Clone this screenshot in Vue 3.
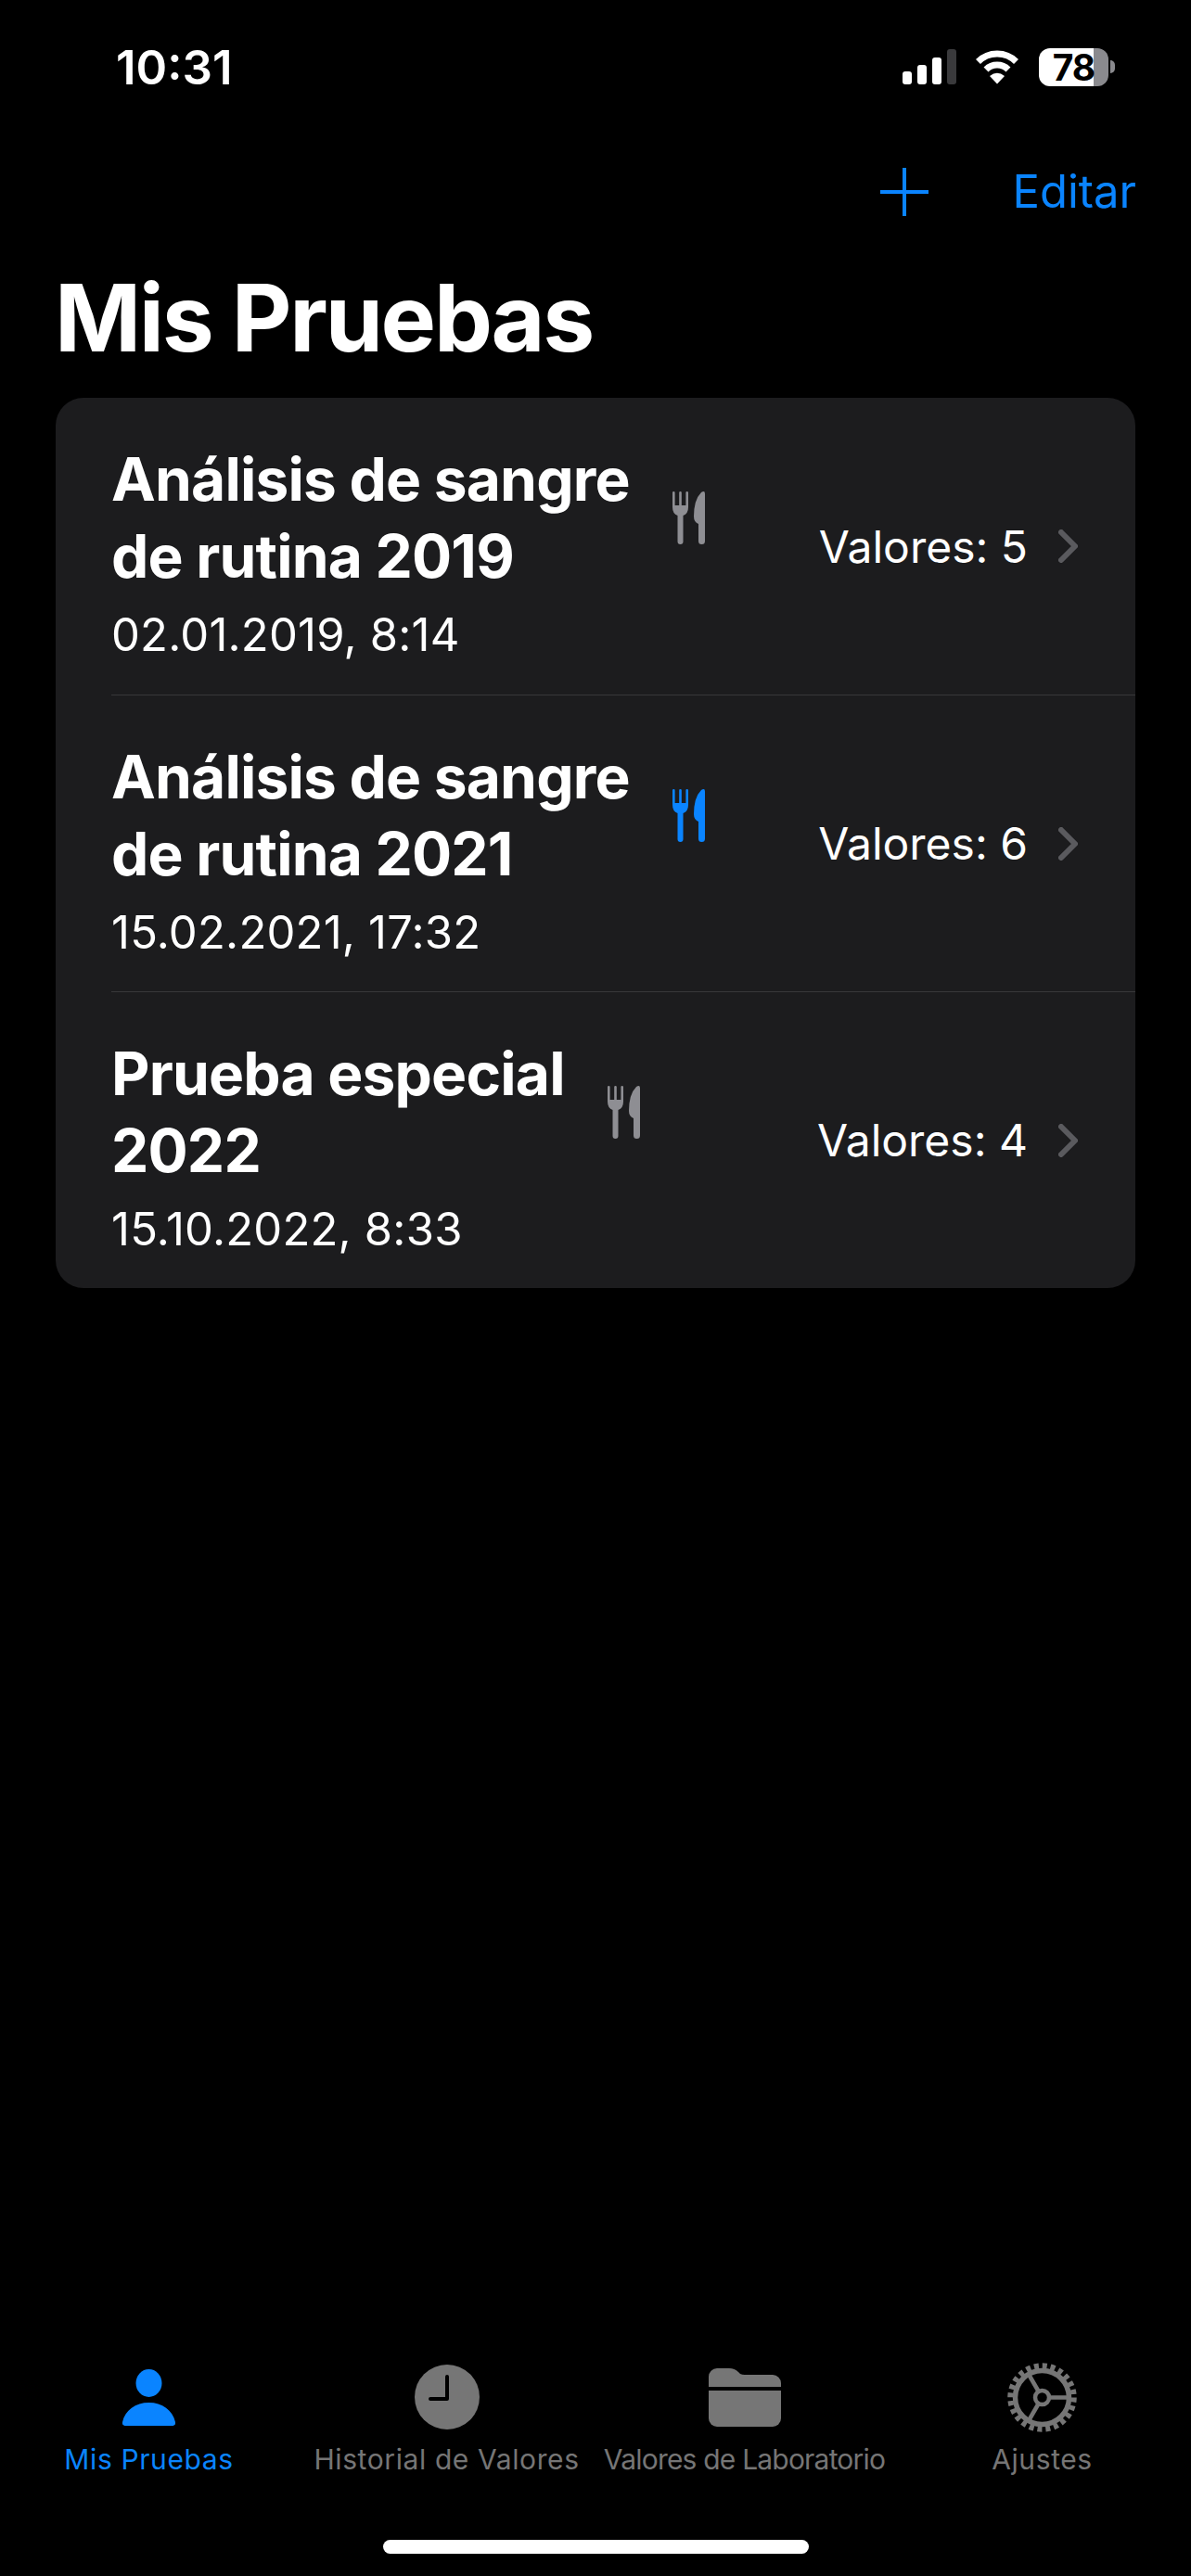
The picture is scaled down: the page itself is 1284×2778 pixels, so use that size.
<script setup>
const tests = [
  { lines: ['Análisis de sangre', 'de rutina 2019'], date: '02.01.2019, 8:14', values: 5, fasting: false },
  { lines: ['Análisis de sangre', 'de rutina 2021'], date: '15.02.2021, 17:32', values: 6, fasting: true },
  { lines: ['Prueba especial', '2022'], date: '15.10.2022, 8:33', values: 4, fasting: false }
]
</script>

<template>
  <div class="page">
    <!-- Status bar -->
    <div class="status-bar">
      <span class="time">10:31</span>
      <div class="status-icons">
        <div class="signal">
          <i class="bar b1"></i>
          <i class="bar b2"></i>
          <i class="bar b3"></i>
          <i class="bar b4"></i>
        </div>
        <svg class="wifi" width="50" height="37" viewBox="0 0 50 37">
          <path d="M4.5 12.5a29 29 0 0 1 41 0" fill="none" stroke="#fff" stroke-width="7" />
          <path d="M13 21a17 17 0 0 1 24 0" fill="none" stroke="#fff" stroke-width="7" />
          <path d="M25 36.5L17 28q8-6.500 16 0z" fill="#fff" />
        </svg>
        <div class="battery">78</div>
        <i class="battery-cap"></i>
      </div>
    </div>

    <!-- Nav -->
    <div class="nav">
      <svg width="52" height="52" viewBox="0 0 52 52">
        <path d="M26 0v52M0 26h52" stroke="#0a84ff" stroke-width="4" stroke-linecap="round" />
      </svg>
      <span class="edit">Editar</span>
    </div>

    <h1 class="title">Mis Pruebas</h1>

    <!-- List of tests -->
    <div class="card">
      <div v-for="test in tests" :key="test.date" class="row">
        <div class="row-text">
          <div v-for="line in test.lines" :key="line" class="row-title">{{ line }}</div>
          <div class="row-date">{{ test.date }}</div>
        </div>
        <svg class="cutlery" :class="{ active: test.fasting }" width="35" height="57" viewBox="0 0 35 57">
          <path d="M0 1.300a1.300 1.300 0 0 1 2.600 0V15h4.600V1.300a1.300 1.300 0 0 1 2.600 0V15h4.600V1.300a1.300 1.300 0 0 1 2.600 0V17q0 7-5.500 9v28a3 3 0 0 1-6 0V26Q0 24 0 17z" />
          <path d="M35 2.500V53.500a3.500 3.500 0 0 1-7 0V35q-5-2-5-8Q23 9 31 1q4-2.500 4 1.500z" />
        </svg>
        <span class="row-values">Valores: {{ test.values }}</span>
        <svg class="chevron" width="21" height="36" viewBox="0 0 21 36">
          <path d="M3 3l15 15L3 33" fill="none" stroke="#5a5a5e" stroke-width="6" stroke-linecap="round" stroke-linejoin="round" />
        </svg>
      </div>
    </div>

    <!-- Tab bar -->
    <div class="tabs">
      <div class="tab active">
        <div class="tab-icon">
          <svg width="57" height="61" viewBox="0 0 57 61">
            <ellipse cx="28.500" cy="15" rx="14" ry="15" fill="#0a84ff" />
            <path d="M3 61a3 3 0 0 1-3-4C3 44 14 36 28.500 36S54 44 57 57a3 3 0 0 1-3 4z" fill="#0a84ff" />
          </svg>
        </div>
        <span>Mis Pruebas</span>
      </div>
      <div class="tab">
        <div class="tab-icon">
          <svg width="70" height="70" viewBox="0 0 70 70">
            <circle cx="35" cy="35" r="35" fill="#767676" />
            <path d="M35 13v24H17" fill="none" stroke="#000" stroke-width="4" stroke-linecap="round" stroke-linejoin="round" />
          </svg>
        </div>
        <span>Historial de Valores</span>
      </div>
      <div class="tab tight">
        <div class="tab-icon">
          <svg width="78" height="63" viewBox="0 0 78 63">
            <path d="M0 20V9a9 9 0 0 1 9-9h13q6 0 10 4l2 2q2 1 5 1h30a9 9 0 0 1 9 9v4z" fill="#767676" />
            <path d="M0 24h78v30a9 9 0 0 1-9 9H9a9 9 0 0 1-9-9z" fill="#767676" />
          </svg>
        </div>
        <span>Valores de Laboratorio</span>
      </div>
      <div class="tab">
        <div class="tab-icon">
          <svg width="75" height="75" viewBox="0 0 75 75">
            <g fill="none" stroke="#767676">
              <circle cx="37.500" cy="37.500" r="34" stroke-width="6.500" stroke-dasharray="5 3.900" />
              <circle cx="37.500" cy="37.500" r="29" stroke-width="5.500" />
              <circle cx="37.500" cy="37.500" r="7.500" stroke-width="4.500" />
              <path d="M45 37.500h22M33.700 31L22.700 12M33.700 44L22.700 63" stroke-width="4.500" />
            </g>
          </svg>
        </div>
        <span>Ajustes</span>
      </div>
    </div>

    <div class="home-bar"></div>
  </div>
</template>

<style>
html, body {
  background: #000;
}
</style>

<style scoped>
.page {
  min-height: 2778px;
  display: flex;
  flex-direction: column;
  background: #000;
  color: #fff;
  font-family: Inter, "Liberation Sans", sans-serif;
  box-sizing: border-box;
}

.status-bar {
  display: flex;
  justify-content: space-between;
  align-items: center;
  height: 60px;
  margin-top: 42px;
  padding: 0 82px 0 125px;
}

.time {
  font-size: 51px;
  font-weight: 600;
}

.status-icons {
  display: flex;
  align-items: center;
}

.signal {
  display: flex;
  align-items: flex-end;
  gap: 6px;
  height: 38px;
  margin-right: 19px;
}

.bar {
  width: 10px;
  background: #fff;
  border-radius: 3px;
}

.b1 { height: 14px; }
.b2 { height: 21px; }
.b3 { height: 29px; }
.b4 { height: 38px; background: #3a3a3c; }

.wifi {
  margin-right: 20px;
}

.battery {
  width: 75px;
  height: 41px;
  border-radius: 12px;
  background: linear-gradient(90deg, #fff 79%, #8a8a8e 79%);
  color: #000;
  font-size: 39px;
  font-weight: 700;
  line-height: 41px;
  letter-spacing: -1px;
  text-align: center;
}

.battery-cap {
  width: 5px;
  height: 14px;
  margin-left: 2px;
  background: #8a8a8e;
  border-radius: 0 7px 7px 0;
}

.nav {
  display: flex;
  justify-content: flex-end;
  align-items: center;
  gap: 90px;
  height: 60px;
  margin-top: 75px;
  padding-right: 59px;
}

.edit {
  color: #0a84ff;
  font-size: 49px;
  line-height: 60px;
}

.title {
  margin: 46px 0 0 59px;
  font-size: 100px;
  font-weight: 700;
  line-height: 120px;
  letter-spacing: -2.300px;
}

.card {
  margin: 26px 60px 0;
  background: #1c1c1e;
  border-radius: 30px;
  overflow: hidden;
}

.row {
  display: flex;
  align-items: center;
  height: 320px;
  margin-left: 60px;
  padding-right: 62px;
  box-sizing: border-box;
}

.row + .row {
  border-top: 1px solid #38383a;
}

.row-title {
  font-size: 64px;
  font-weight: 700;
  line-height: 83px;
  letter-spacing: -0.800px;
}

.row-date {
  margin-top: 14px;
  font-size: 49px;
  line-height: 60px;
  letter-spacing: 0.200px;
}

.row-text {
  align-self: flex-start;
  padding-top: 46px;
}

.cutlery {
  align-self: flex-start;
  margin: 101px 0 0 46px;
  fill: #8e8e93;
}

.cutlery.active {
  fill: #0a84ff;
}

.row-values {
  margin-left: auto;
  font-size: 48px;
}

.chevron {
  margin-left: 33px;
}

.tabs {
  display: grid;
  grid-template-columns: repeat(4, 1fr);
  margin-top: auto;
}

.tab {
  display: flex;
  flex-direction: column;
  align-items: center;
  gap: 12px;
  color: #757575;
  font-size: 30px;
  line-height: 36px;
  letter-spacing: 0.600px;
  white-space: nowrap;
}

.tab.tight {
  letter-spacing: -0.800px;
}

.tab.active {
  color: #0a84ff;
}

.tab-icon {
  display: flex;
  align-items: center;
  justify-content: center;
  height: 74px;
}

.home-bar {
  align-self: center;
  width: 459px;
  height: 15px;
  margin: 69px 0 24px;
  background: #fff;
  border-radius: 8px;
}
</style>
